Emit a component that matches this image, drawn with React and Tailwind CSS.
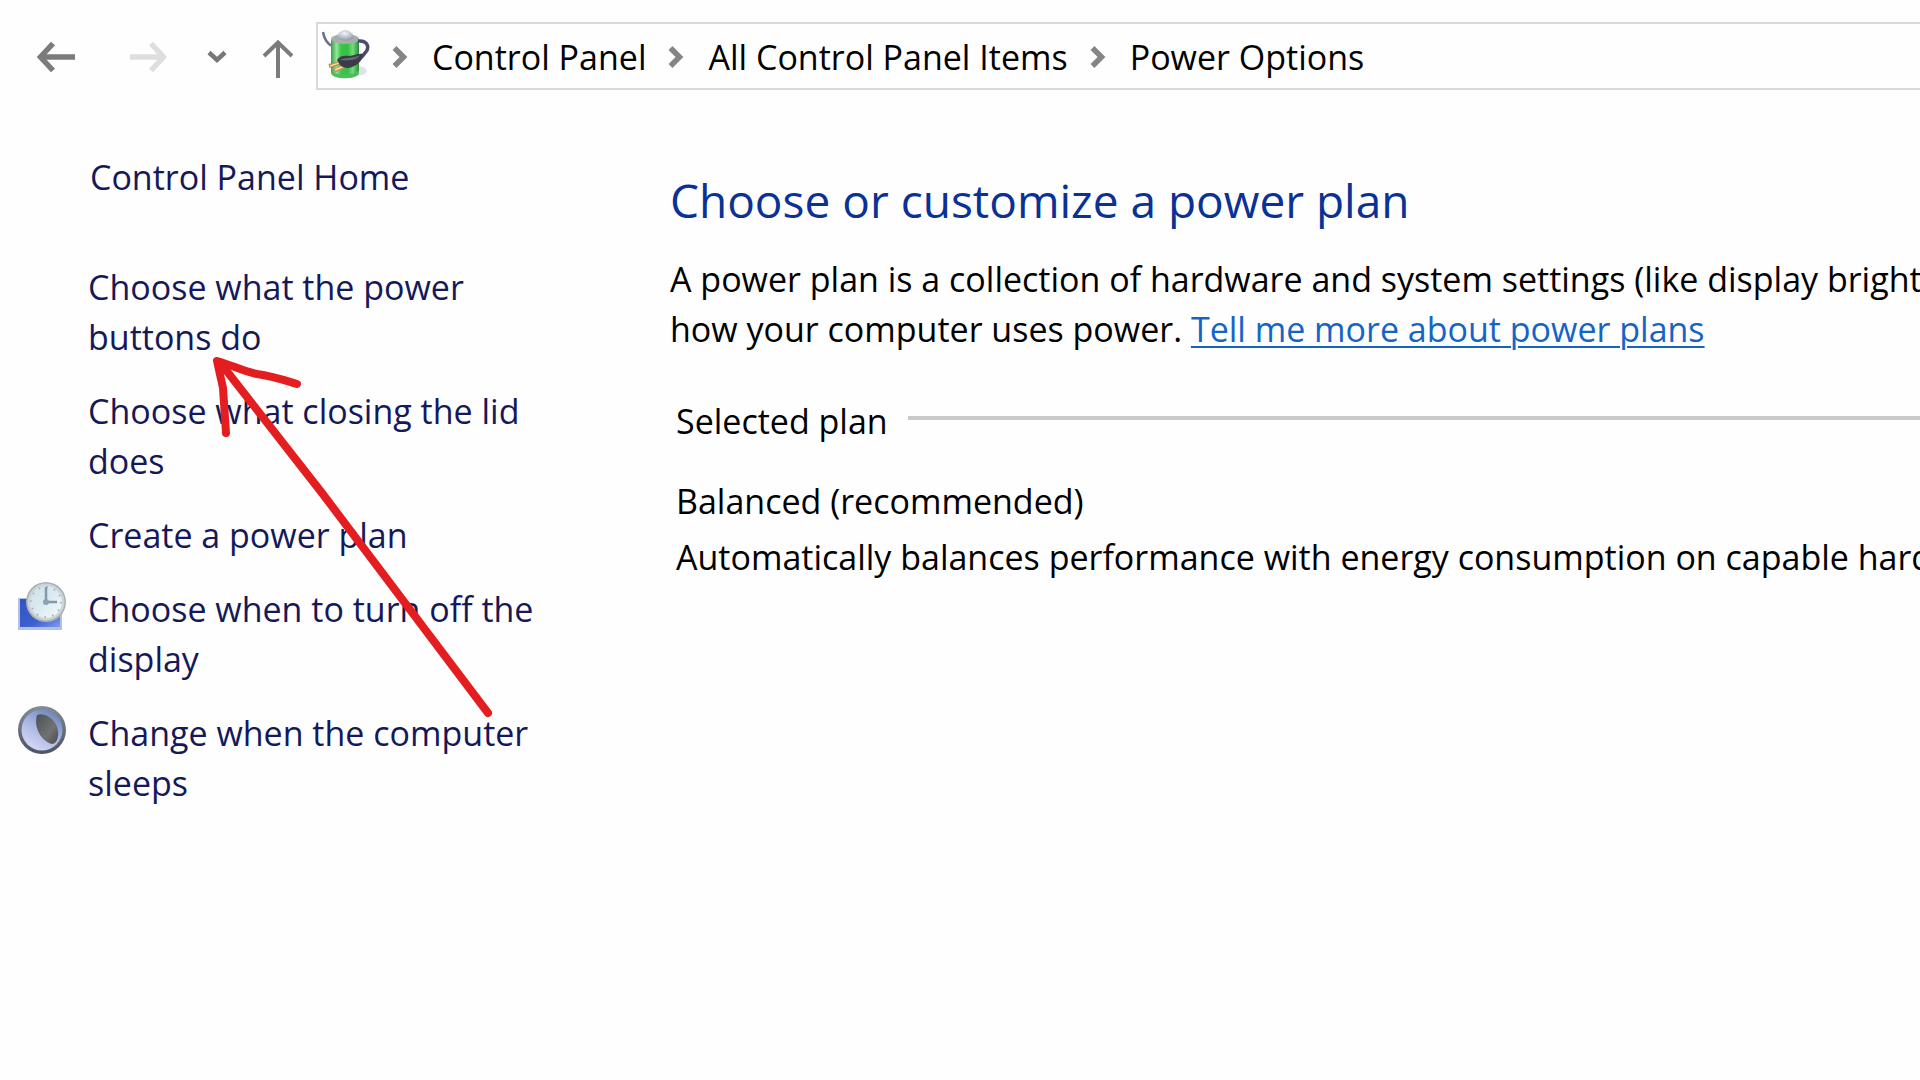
const crumbs = ['Control Panel', 'All Control Panel Items', 'Power Options'];

const tasks = [
    { label: 'Choose what the power buttons do' },
    { label: 'Choose what closing the lid does' },
    { label: 'Create a power plan' },
    { label: 'Choose when to turn off the display', icon: DisplayClockIcon },
    { label: 'Change when the computer sleeps', icon: SleepIcon },
];

function ArrowLeftIcon() {
    return (
        <svg width="40" height="32" viewBox="0 0 40 32" fill="none" stroke="#7b7b7b" strokeWidth="5.5">
            <path d="M39 16H5" />
            <path d="M17 2.5L4.500 16L17 29.5" />
        </svg>
    );
}

function ArrowRightIcon() {
    return (
        <svg width="40" height="32" viewBox="0 0 40 32" fill="none" stroke="#dedede" strokeWidth="5.5">
            <path d="M1 16H35" />
            <path d="M22 2.5L34.500 16L22 29.5" />
        </svg>
    );
}

function ArrowUpIcon() {
    return (
        <svg width="32" height="40" viewBox="0 0 32 40" fill="none" stroke="#7b7b7b" strokeWidth="4">
            <path d="M16 39V4" />
            <path d="M2 17L16 3.5L30 17" />
        </svg>
    );
}

function CaretDownIcon() {
    return (
        <svg width="20" height="14" viewBox="0 0 20 14" fill="none" stroke="#777" strokeWidth="4.5">
            <path d="M2 2.5L10 10L18 2.5" />
        </svg>
    );
}

function CrumbChevron() {
    return (
        <svg width="16" height="22" viewBox="0 0 16 22" fill="none" stroke="#858585" strokeWidth="5.5" className="shrink-0">
            <path d="M2.5 2L11.500 11L2.5 20" />
        </svg>
    );
}

function BatteryIcon() {
    return (
        <svg width="48" height="50" viewBox="0 0 48 50" fill="none" className="mb-1 shrink-0">
            <defs>
                <linearGradient id="cell" x1="0" x2="1" y1="0" y2="0">
                    <stop offset="0" stopColor="#3f9a4b" />
                    <stop offset="0.2" stopColor="#8fe896" />
                    <stop offset="0.36" stopColor="#3ec24a" />
                    <stop offset="0.6" stopColor="#35c043" />
                    <stop offset="0.78" stopColor="#75dc7c" />
                    <stop offset="1" stopColor="#2c8a3a" />
                </linearGradient>
                <radialGradient id="cap" cx="0.45" cy="0.3" r="0.7">
                    <stop offset="0" stopColor="#f3f4f8" />
                    <stop offset="1" stopColor="#8f96a4" />
                </radialGradient>
            </defs>
            <ellipse cx="34" cy="42" rx="11" ry="5" fill="#d6d6d6" opacity="0.7" />
            <path d="M1 3C2 9 4 14 10 17" stroke="#6d7088" strokeWidth="2.5" />
            <path d="M9 10V43C9 51 37 51 37 43V10Z" fill="url(#cell)" />
            <path d="M9 41C12 47 33 47 37 41V44C36 51 10 51 9 44Z" fill="#4fbd5b" />
            <ellipse cx="23" cy="10" rx="14" ry="5" fill="#a5b0ab" />
            <path d="M15 8C17 -1 29 -1 32 8C29 13 18 13 15 8Z" fill="url(#cap)" />
            <path d="M36 12C46 11 48 19 43 24C41 27 40 28 37 30" stroke="#4c4d6b" strokeWidth="3.5" />
            <path d="M18 34L7 37" stroke="#b98c4c" strokeWidth="4" />
            <path d="M17 34L8 37" stroke="#f2d594" strokeWidth="1.5" />
            <path d="M23 37L12 42" stroke="#c4965a" strokeWidth="4" />
            <path d="M22 37L13 41" stroke="#f7dfa8" strokeWidth="1.5" />
            <path d="M15 31C17 27 22 26 27 27C32 27 36 24 41 25C41 31 36 36 30 38C26 40 21 39 18 36Z" fill="#3b3c4a" />
            <path d="M18 31C23 28 31 30 38 26C35 31 28 32 18 31Z" fill="#686a7a" />
        </svg>
    );
}

function DisplayClockIcon() {
    return (
        <svg width="48" height="48" viewBox="0 0 48 48" fill="none">
            <defs>
                <linearGradient id="screen" x1="0" y1="0" x2="1" y2="1">
                    <stop offset="0" stopColor="#2f55c4" />
                    <stop offset="0.6" stopColor="#3d5fd0" />
                    <stop offset="1" stopColor="#7f9bea" />
                </linearGradient>
                <linearGradient id="face" x1="0" y1="0" x2="1" y2="1">
                    <stop offset="0" stopColor="#cfdfe8" />
                    <stop offset="0.5" stopColor="#dcebf1" />
                    <stop offset="1" stopColor="#f3fafb" />
                </linearGradient>
            </defs>
            <path d="M0 16H44V48H0Z" fill="#b5c1e0" />
            <path d="M2 17H42V45H2Z" fill="url(#screen)" />
            <circle cx="28" cy="20" r="20" fill="#a9b0b5" />
            <circle cx="28" cy="20" r="18.5" fill="#cdd3d6" />
            <circle cx="28" cy="20" r="16" fill="url(#face)" />
            <circle cx="28" cy="20" r="15" stroke="#a6b4bd" strokeWidth="2" strokeDasharray="1.5 6.35" />
            <path d="M28 5V20H39" stroke="#8299aa" strokeWidth="2.5" />
            <circle cx="28" cy="20" r="3" fill="#8ca1b1" />
        </svg>
    );
}

function SleepIcon() {
    return (
        <svg width="48" height="48" viewBox="0 0 48 48" fill="none">
            <defs>
                <linearGradient id="ring" x1="0" y1="0" x2="0" y2="1">
                    <stop offset="0" stopColor="#858c98" />
                    <stop offset="1" stopColor="#4d5460" />
                </linearGradient>
                <linearGradient id="moon" x1="0.8" y1="0" x2="0.2" y2="1">
                    <stop offset="0" stopColor="#6582b4" />
                    <stop offset="0.5" stopColor="#a9b5e2" />
                    <stop offset="1" stopColor="#dadcf5" />
                </linearGradient>
                <linearGradient id="shade" x1="0" y1="0" x2="1" y2="1">
                    <stop offset="0" stopColor="#4d5258" />
                    <stop offset="0.6" stopColor="#717171" />
                    <stop offset="1" stopColor="#4c4c4e" />
                </linearGradient>
            </defs>
            <circle cx="24" cy="24" r="24" fill="url(#ring)" />
            <circle cx="24" cy="24" r="20.5" fill="url(#moon)" />
            <path d="M19 9C27 6 39 14 40 25C41 32 38 38 34 38C25 36 15 23 19 9Z" fill="url(#shade)" />
        </svg>
    );
}

function AddressBar() {
    return (
        <header className="flex items-center pt-[22px]">
            <nav aria-label="History" className="flex w-[316px] shrink-0 items-center pl-[36px] pt-[2px]">
                <button type="button" aria-label="Back"><ArrowLeftIcon /></button>
                <button type="button" aria-label="Forward" className="ml-[53px]"><ArrowRightIcon /></button>
                <button type="button" aria-label="Recent locations" className="ml-[38px]"><CaretDownIcon /></button>
                <button type="button" aria-label="Up" className="ml-[35px] pt-1"><ArrowUpIcon /></button>
            </nav>
            <nav aria-label="Breadcrumb" className="flex h-[68px] flex-1 items-center border-2 border-r-0 border-[#d9d9d9] pl-1 text-black">
                <BatteryIcon />
                {crumbs.map((crumb) => (
                    <div key={crumb} className="flex items-center pt-[2px]">
                        <span className="pl-[22px] pr-[24px]"><CrumbChevron /></span>
                        <a href="#" className="whitespace-nowrap">{crumb}</a>
                    </div>
                ))}
            </nav>
        </header>
    );
}

function Sidebar() {
    return (
        <aside className="w-[670px] shrink-0 pt-[62px] text-[#15195a]">
            <a href="#" className="ml-[90px] block">Control Panel Home</a>
            <ul className="mt-[60px] w-[560px] space-y-6">
                {tasks.map((task) => (
                    <li key={task.label} className="flex">
                        <span className="-mt-[2px] flex w-[88px] shrink-0 items-start pl-[18px]">
                            {task.icon && <task.icon />}
                        </span>
                        <a href="#" className="max-w-[460px]">{task.label}</a>
                    </li>
                ))}
            </ul>
        </aside>
    );
}

// Hand-drawn marker pointing at the power buttons link
function MarkerArrow() {
    return (
        <svg
            className="pointer-events-none absolute left-[210px] top-[350px]"
            width="290"
            height="374"
            viewBox="210 350 290 374"
            fill="none"
            stroke="#e41e20"
            strokeWidth="8"
            strokeLinecap="round"
            strokeLinejoin="round"
        >
            <path d="M488 713L322 493L222 365" />
            <path d="M226 433L223 388L217 361C232 365 242 371 257 374C272 376 284 380 297 384" />
        </svg>
    );
}

export default function App() {
    return (
        <div className="relative min-h-screen overflow-hidden bg-[#fefefe] font-['Open_Sans','Noto_Sans',sans-serif] text-[34px] leading-[50px]">
            <AddressBar />
            <div className="flex">
                <Sidebar />
                <main className="min-w-0 flex-1 overflow-hidden pt-[78px] text-black">
                    <h1 className="whitespace-nowrap text-[46px] leading-[64px] text-[#0a3296]">Choose or customize a power plan</h1>
                    <p className="mt-[22px] whitespace-nowrap">
                        A power plan is a collection of hardware and system settings (like display brightness, sleep, etc.) that manages
                        <br />
                        how your computer uses power.{' '}
                        <a href="#" className="text-[#1464c8] underline decoration-2 underline-offset-4">Tell me more about power plans</a>
                    </p>
                    <section className="pl-[6px]">
                        <div className="mt-[42px] flex items-center">
                            <h2 className="whitespace-nowrap">Selected plan</h2>
                            <hr className="mb-[6px] ml-[20px] flex-1 border-0 border-t-4 border-[#cacaca]" />
                        </div>
                        <h3 className="mt-[30px]">Balanced (recommended)</h3>
                        <p className="mt-[6px] whitespace-nowrap">
                            Automatically balances performance with energy consumption on capable hardware.
                        </p>
                    </section>
                </main>
            </div>
            <MarkerArrow />
        </div>
    );
}
